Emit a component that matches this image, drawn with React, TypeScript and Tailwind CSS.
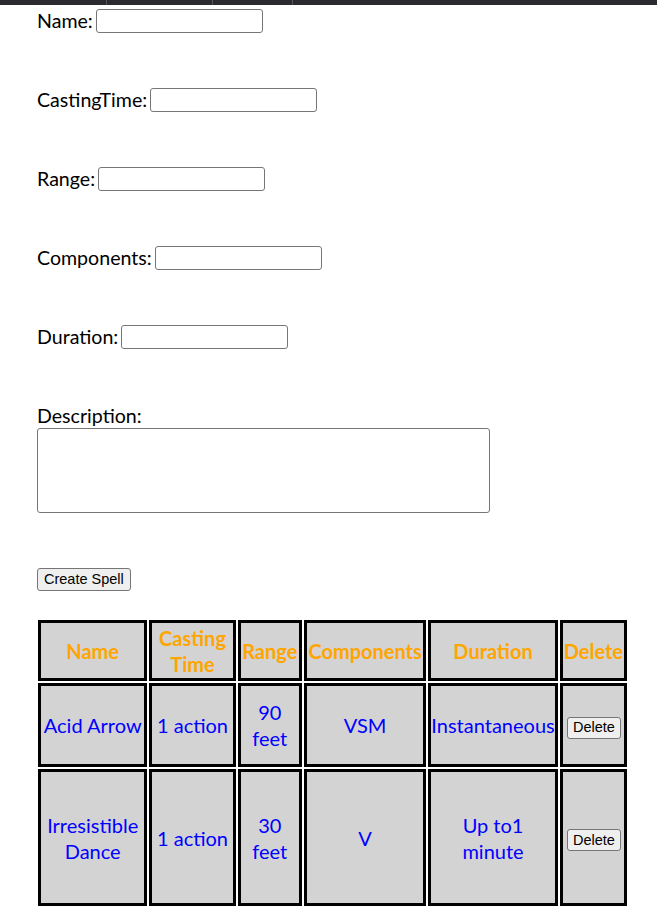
import React from 'react';

type Spell = {
  name: string;
  castingTime: string;
  range: string;
  components: string;
  duration: string;
  height: string;
};

const spells: Spell[] = [
  { name: 'Acid Arrow', castingTime: '1 action', range: '90 feet', components: 'VSM', duration: 'Instantaneous', height: 'h-[84px]' },
  { name: 'Irresistible Dance', castingTime: '1 action', range: '30 feet', components: 'V', duration: 'Up to1 minute', height: 'h-[137px]' },
];

const fields = [
  { label: 'Name:' },
  { label: 'CastingTime:' },
  { label: 'Range:' },
  { label: 'Components:' },
  { label: 'Duration:' },
];

function App() {
  return (
    <div className="min-h-screen bg-white text-black font-['Lato',sans-serif] text-[19.6px] leading-[26px]">
      {/* leftover browser tab strip */}
      <div className="h-[5px] bg-[#2b2a30] flex">
        <div className="w-[107px] border-r border-[#55545a]" />
        <div className="w-[106px] border-r border-[#55545a]" />
        <div className="w-[80px] border-r border-[#55545a]" />
      </div>

      <div className="pl-[37px] pt-[4px]">
        {fields.map((f) => (
          <div key={f.label} className="flex items-center h-[24px] mb-[55px]">
            <label>{f.label}</label>
            <input
              type="text"
              className="ml-[3px] w-[167px] h-[24px] border border-[#767676] rounded-[3px] bg-white"
            />
          </div>
        ))}

        <div className="-mt-[1px]">
          <label className="block h-[25px]">Description:</label>
          <textarea className="block w-[453px] h-[85px] border border-[#767676] rounded-[3px] resize-none" />
        </div>

        <button className="mt-[55px] h-[23px] px-[6px] bg-[#efefef] border border-[#767676] rounded-[3px] font-['Liberation_Sans',sans-serif] text-[14.5px] leading-none">
          Create Spell
        </button>

        <table className="mt-[27px] -ml-[1px] w-[593px] table-fixed border-separate border-spacing-[2px] text-[20px]">
          <thead>
            <tr>
              {[
                ['Name', 'w-[109px]'],
                ['Casting Time', 'w-[86px]'],
                ['Range', 'w-[64px]'],
                ['Components', 'w-[122px]'],
                ['Duration', 'w-[129px]'],
                ['Delete', 'w-[67px]'],
              ].map(([h, w]) => (
                <th
                  key={h}
                  className={`${w} h-[61px] p-0 border-[3px] border-black bg-[#d3d3d3] text-[#ffa500] font-bold text-center`}
                >
                  {h}
                </th>
              ))}
            </tr>
          </thead>
          <tbody>
            {spells.map((s) => (
              <tr key={s.name}>
                {[s.name, s.castingTime, s.range, s.components, s.duration].map((v, i) => (
                  <td
                    key={i}
                    className={`${s.height} p-0 border-[3px] border-black bg-[#d3d3d3] text-[#0000ff] text-center`}
                  >
                    {v}
                  </td>
                ))}
                <td className={`${s.height} p-0 border-[3px] border-black bg-[#d3d3d3] text-center`}>
                  <button className="ml-[1px] h-[22px] px-[5px] bg-[#efefef] border border-[#767676] rounded-[3px] font-['Liberation_Sans',sans-serif] text-[14.5px] leading-none text-black">
                    Delete
                  </button>
                </td>
              </tr>
            ))}
          </tbody>
        </table>
      </div>
    </div>
  );
}

export default App;
